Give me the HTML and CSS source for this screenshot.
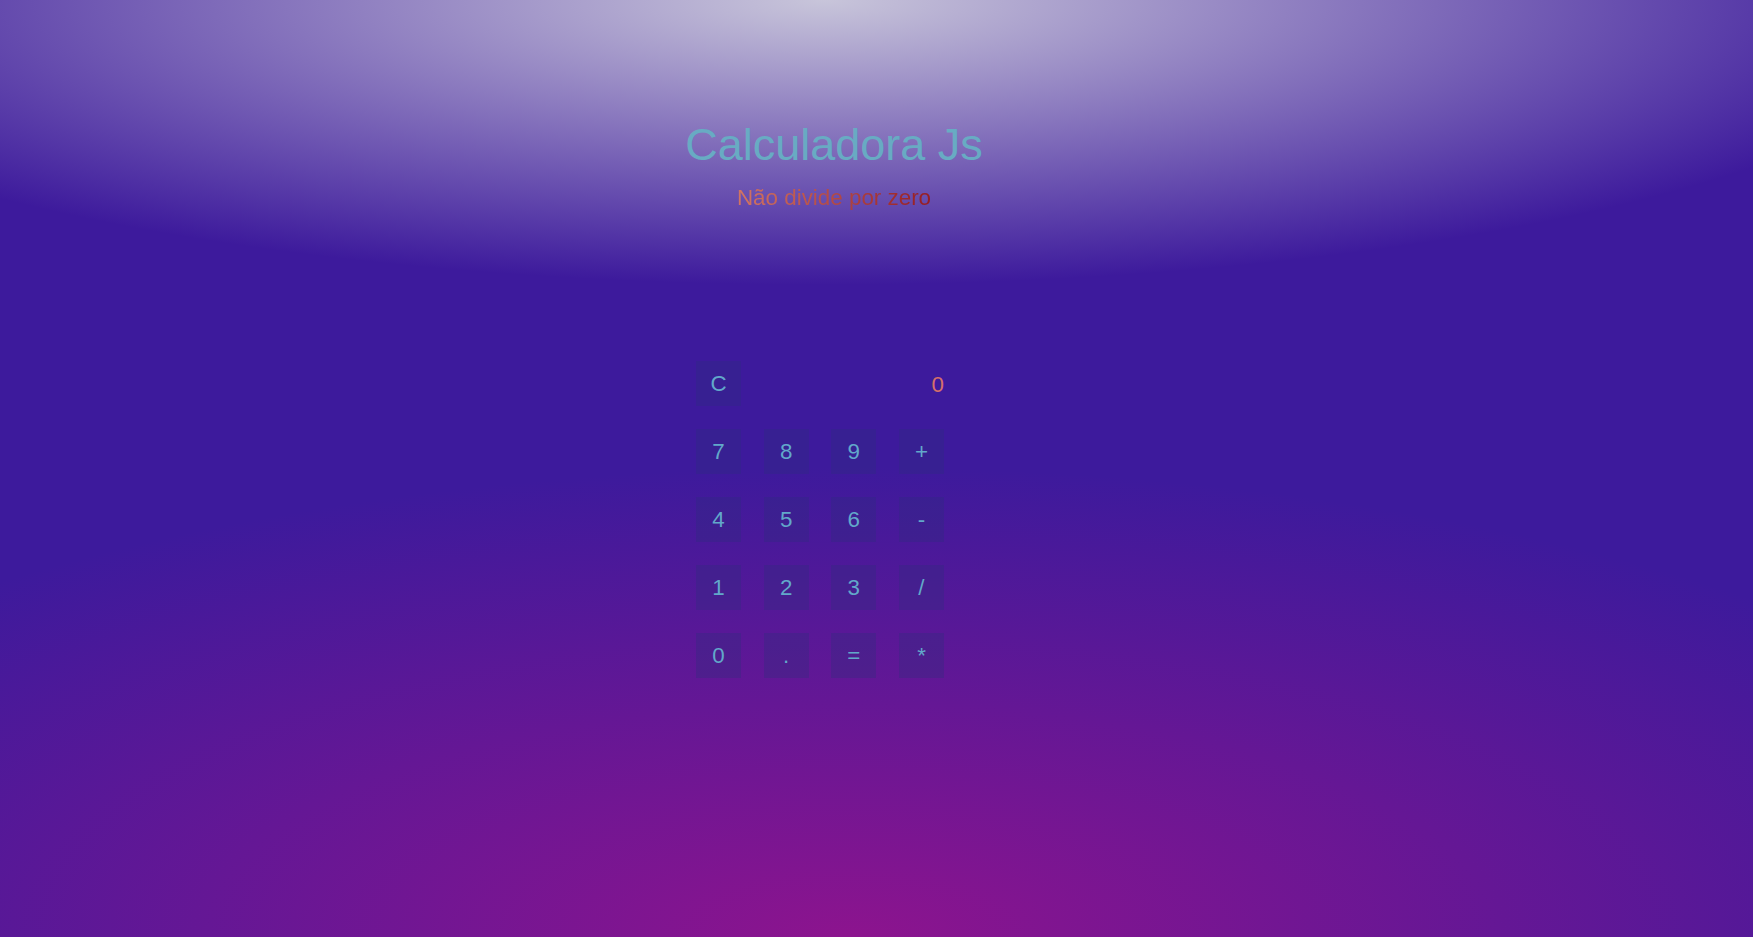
FILE: index.html
```html
<!DOCTYPE html>
<html lang="pt-BR">
<head>
<meta charset="utf-8">
<title>Calculadora Js</title>
<link rel="stylesheet" href="styles.css">
</head>
<body>
<div class="page">
  <header class="header">
    <h1 class="title">Calculadora Js</h1>
    <p class="subtitle"><span class="subtitle-text">Não divide por zero</span></p>
  </header>
  <section class="calc">
    <div class="keys">
      <button class="key">C</button>
      <div class="display">0</div>
      <button class="key">7</button>
      <button class="key">8</button>
      <button class="key">9</button>
      <button class="key">+</button>
      <button class="key">4</button>
      <button class="key">5</button>
      <button class="key">6</button>
      <button class="key">-</button>
      <button class="key">1</button>
      <button class="key">2</button>
      <button class="key">3</button>
      <button class="key">/</button>
      <button class="key">0</button>
      <button class="key">.</button>
      <button class="key">=</button>
      <button class="key">*</button>
    </div>
  </section>
</div>
</body>
</html>
```

FILE: styles.css
```css
html, body {
  margin: 0;
  padding: 0;
  height: 100%;
}

body {
  font-family: "Liberation Sans", Arial, sans-serif;
  background-color: #3d1a9c;
  background-image:
    radial-gradient(ellipse 1150px 285px at 47% 0%, rgba(200, 197, 218, 1) 0%, rgba(200, 197, 218, 0) 100%),
    radial-gradient(ellipse 1300px 470px at 48.5% 100%, rgba(140, 20, 142, 1) 0%, rgba(140, 20, 142, 0) 100%);
  background-repeat: no-repeat;
  min-height: 937px;
  overflow: hidden;
}

.page {
  width: 1668px;
  padding-top: 119px;
  display: flex;
  flex-direction: column;
  align-items: center;
}

.header {
  text-align: center;
}

.title {
  margin: 0;
  font-size: 45px;
  font-weight: normal;
  line-height: 52px;
  color: #68abc3;
}

.subtitle {
  margin: 14px 0 0;
  font-size: 22.4px;
  line-height: 26px;
}

.subtitle-text {
  display: inline-block;
  background-image: linear-gradient(90deg, #d27563 0%, #b34a44 50%, #961c22 100%);
  -webkit-background-clip: text;
  background-clip: text;
  color: transparent;
}

.calc {
  margin-top: 150px;
  padding-right: 28px;
}

.keys {
  display: grid;
  grid-template-columns: repeat(4, 45px);
  grid-auto-rows: 45px;
  column-gap: 22.67px;
  row-gap: 23px;
}

.key {
  width: 45px;
  height: 45px;
  border: none;
  margin: 0;
  padding: 0;
  background: rgba(42, 48, 125, 0.32);
  color: #62a8ca;
  font-family: "Liberation Sans", Arial, sans-serif;
  font-size: 22.4px;
  line-height: 45px;
  text-align: center;
  cursor: pointer;
}

.display {
  grid-column: 2 / 5;
  text-align: right;
  color: #d6706a;
  font-size: 22.4px;
  line-height: 47px;
}
```
